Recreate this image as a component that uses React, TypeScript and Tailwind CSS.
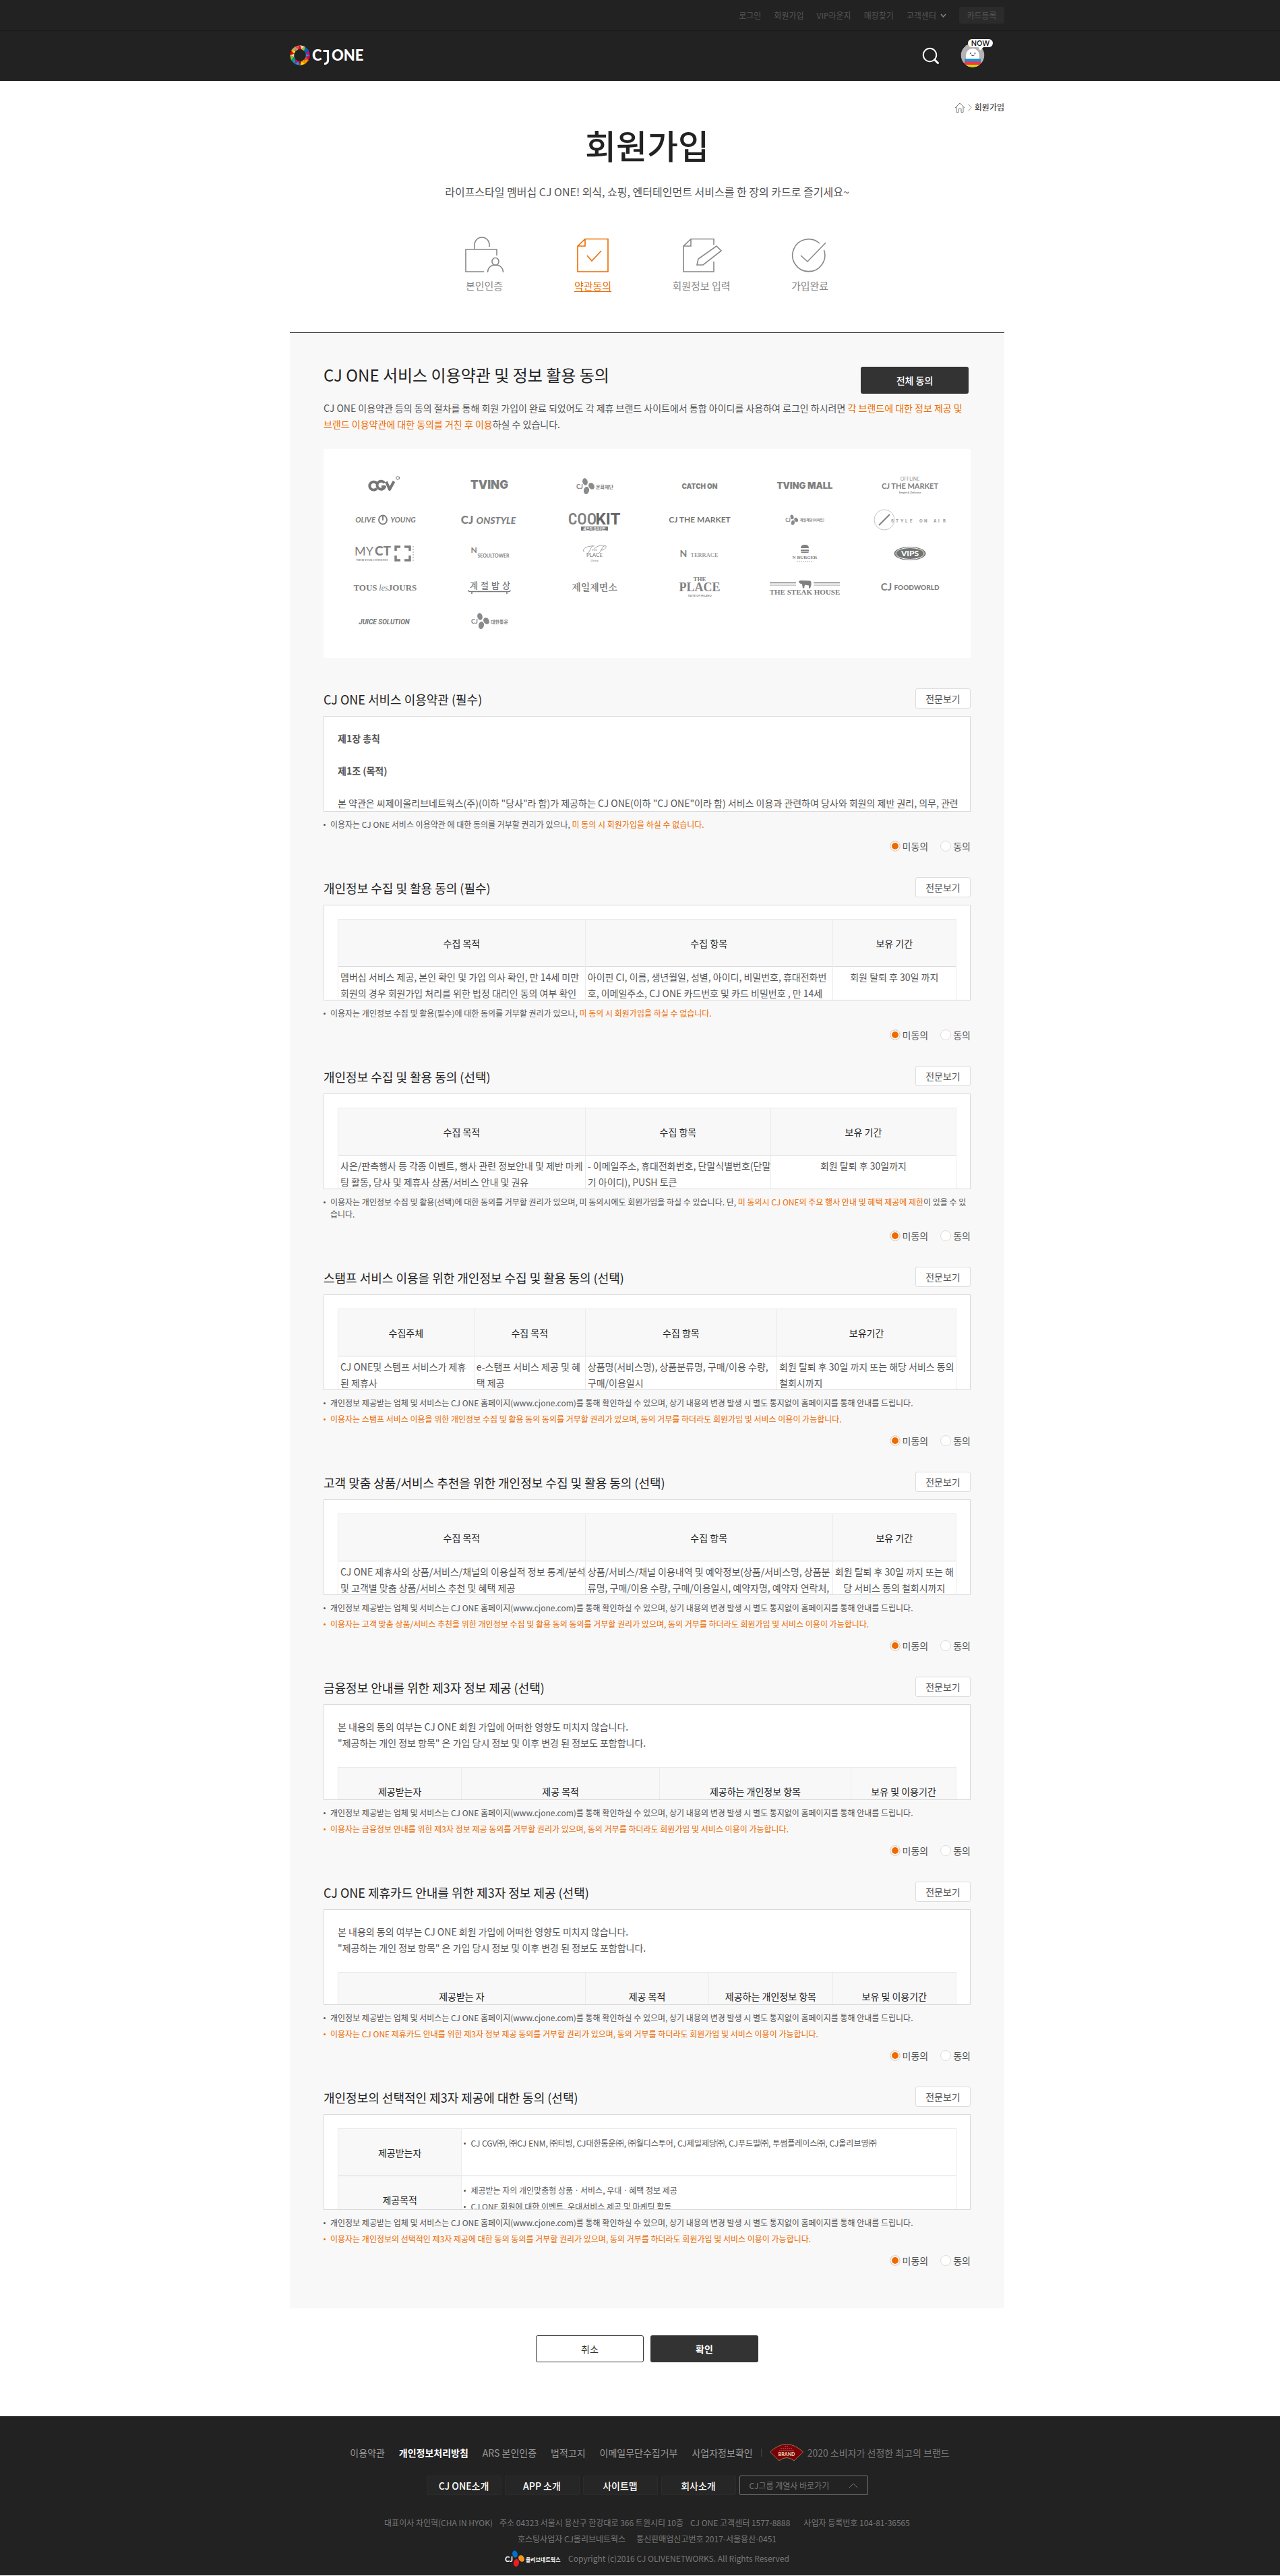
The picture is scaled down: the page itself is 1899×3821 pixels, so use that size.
import { Fragment, type ReactNode } from "react";

const LOGO_COLORS = ["#e5004f", "#f39800", "#ffe100", "#00a0e9", "#009e96", "#8fc31f", "#e60012", "#c9a063", "#ea5532", "#f6d3a0", "#0068b7", "#e4007f"];

function polar(r: number, turn: number) {
  const a = turn * Math.PI * 2;
  return `${(15 + r * Math.cos(a)).toFixed(2)},${(15 + r * Math.sin(a)).toFixed(2)}`;
}

function SiteLogo() {
  const n = 12;
  return (
    <svg width="112" height="32" viewBox="0 0 112 32" role="img" aria-label="CJ ONE">
      {Array.from({ length: n }, (_, i) => (
        <Fragment key={i}>
          <polygon points={`${polar(15, i / n)} ${polar(15, (i + 1) / n)} ${polar(9, (i + 0.5) / n)}`} fill={LOGO_COLORS[i % 12]} />
          <polygon points={`${polar(9, (i - 0.5) / n)} ${polar(9, (i + 0.5) / n)} ${polar(15, i / n)}`} fill={LOGO_COLORS[(i * 5 + 3) % 12]} />
        </Fragment>
      ))}
      <g fill="#fff" fontFamily="Lato, sans-serif" fontWeight="900" fontSize="22">
        <text x="33" y="23">C</text>
        <text x="62" y="23">ONE</text>
      </g>
      <path d="M49.500 8.500h7v14c0 3.500-2 5-5.500 5" fill="none" stroke="#fff" strokeWidth="3.200" />
    </svg>
  );
}

function SearchIcon() {
  return (
    <svg width="26" height="26" viewBox="0 0 26 26" fill="none" stroke="#fff" aria-hidden="true">
      <circle cx="11.500" cy="11.500" r="9.700" strokeWidth="2" />
      <path d="M18.500 18.500l5 5" strokeWidth="3" strokeLinecap="round" />
    </svg>
  );
}

function AvatarIcon() {
  return (
    <svg width="50" height="44" viewBox="0 0 50 44" aria-hidden="true">
      <defs>
        <clipPath id="avatar-face"><circle cx="18" cy="25" r="17.500" /></clipPath>
      </defs>
      <g clipPath="url(#avatar-face)">
        <circle cx="18" cy="25" r="17.500" fill="#b3b3b3" />
        <path d="M8 44V25a10 10 0 0 1 20 0v19z" fill="#fff" />
        <path d="M6 30h24v4H6z" fill="#0a9bdc" />
        <path d="M6 34h24v5H6z" fill="#f0384a" />
        <path d="M6 39h24v6H6z" fill="#cddc00" />
      </g>
      <circle cx="15" cy="22" r="0.900" fill="#333" />
      <circle cx="21.500" cy="22" r="0.900" fill="#333" />
      <path d="M15.500 24.500q2.700 2.500 5.400 0" fill="none" stroke="#333" />
      <rect x="11" y="1" width="37" height="12" rx="6" fill="#fff" />
      <path d="M26 12h9l-6 6z" fill="#fff" />
      <text x="29.500" y="11" textAnchor="middle" fontFamily="Inter, sans-serif" fontWeight="500" fontSize="11" fill="#111">NOW</text>
    </svg>
  );
}

const stepIcons = [
  <g key="lock">
    <path d="M29 53H2V20h46v9" />
    <path d="M15 19v-6a11 11 0 0 1 22 0v3" />
    <ellipse cx="46" cy="38" rx="5" ry="5.500" />
    <path d="M34.500 54c0-6 4-11 11.500-11s11.500 5 11.500 11" />
  </g>,
  <g key="check">
    <path d="M18 4.500h34V53H7V15z M18 4.500V15H7" />
    <path d="M21 29l7 8 14-15" />
  </g>,
  <g key="write">
    <path d="M48 13V4.500H14L3 15v38h45V38 M14 4.500V15H3" />
    <path d="M23 43l2-9 27-19 7 7-27 21z" />
  </g>,
  <g key="done">
    <path d="M44 11A24 24 0 1 0 50.500 21" />
    <path d="M16 29l10 9 27-28" />
  </g>,
];

const steps = ["본인인증", "약관동의", "회원정보 입력", "가입완료"];

/* ---- Partner brand marks ---- */

type Word = { t: string; x: number; y: number; s: number; f?: string; w?: number; i?: boolean; c?: string };

const SANS = "Lato, sans-serif";
const ROB = "Roboto, sans-serif";
const SERIF = "'Liberation Serif', serif";
const KR = "'Noto Sans CJK KR', sans-serif";
const INTER = "Inter, sans-serif";

function Mark({ label, words = [], children }: { label: string; words?: Word[]; children?: ReactNode }) {
  return (
    <svg width="120" height="40" viewBox="0 0 120 40" role="img" aria-label={label} fill="#808080">
      {children}
      {words.map((w) => (
        <text key={w.t} x={w.x} y={w.y} textAnchor="middle" fontSize={w.s} fontFamily={w.f ?? SANS} fontWeight={w.w ?? 700} fontStyle={w.i ? "italic" : "normal"} fill={w.c ?? "#808080"}>
          {w.t}
        </text>
      ))}
    </svg>
  );
}

function Petals({ x, y, s = 1, colors = ["#8a8a8a", "#8a8a8a", "#8a8a8a"] }: { x: number; y: number; s?: number; colors?: string[] }) {
  return (
    <g transform={`translate(${x} ${y}) scale(${s})`}>
      <ellipse cx="-3" cy="-6.500" rx="3.800" ry="5.200" transform="rotate(-15 -3 -6.500)" fill={colors[0]} />
      <ellipse cx="6.500" cy="0" rx="4" ry="5.200" transform="rotate(-35 6.500 0)" fill={colors[1]} />
      <ellipse cx="-1" cy="6.500" rx="4" ry="5.500" transform="rotate(12 -1 6.500)" fill={colors[2]} />
    </g>
  );
}

const brands: ReactNode[] = [
  <Mark key="cgv" label="CGV">
    <g fill="none" stroke="#757575" strokeWidth="4" strokeLinejoin="round">
      <path d="M49 16A6 6 0 1 0 49 23.500" />
      <path d="M60.500 15.500A6 6 0 1 0 61 21H56" />
      <path d="M63 13.500l5 11.500 6.500-12" />
    </g>
    <circle cx="80" cy="8" r="2.400" fill="none" stroke="#777" strokeWidth="1.500" strokeDasharray="1.600 0.800" />
  </Mark>,
  <Mark key="tving" label="TVING" words={[{ t: "TVING", x: 60, y: 24, s: 17, f: INTER, w: 900 }]} />,
  <Mark key="cf" label="CJ 문화재단" words={[{ t: "CJ", x: 38, y: 24, s: 9 }, { t: "문화재단", x: 75, y: 24, s: 7, f: KR }]}>
    <Petals x={49} y={20} />
  </Mark>,
  <Mark key="catch" label="CATCH ON" words={[{ t: "CATCH ON", x: 60, y: 24, s: 10, f: INTER, w: 900 }]} />,
  <Mark key="tvm" label="TVING MALL" words={[{ t: "TVING MALL", x: 60, y: 24, s: 13, f: INTER, w: 900 }]} />,
  <Mark key="off" label="OFFLINE CJ THE MARKET" words={[
    { t: "OFFLINE", x: 60, y: 12, s: 7, w: 400, c: "#999" },
    { t: "CJ THE MARKET", x: 60, y: 24, s: 11 },
    { t: "Simple & Delicious", x: 60, y: 31, s: 4 },
  ]} />,

  <Mark key="oy" label="OLIVE YOUNG" words={[{ t: "OLIVE", x: 32, y: 24, s: 11, i: true }, { t: "YOUNG", x: 88, y: 24, s: 11, i: true }]}>
    <ellipse cx="58" cy="20" rx="6" ry="6.600" fill="none" stroke="#808080" strokeWidth="2" />
    <path d="M58 14v7" stroke="#808080" strokeWidth="2" />
  </Mark>,
  <Mark key="ons" label="CJ ONSTYLE" words={[{ t: "CJ", x: 27, y: 26, s: 17, w: 900 }, { t: "ONSTYLE", x: 70, y: 26, s: 14, w: 900, i: true }]} />,
  <Mark key="cook" label="COOKIT" words={[{ t: "COO", x: 42, y: 27, s: 24, f: "'Roboto Condensed', Roboto, sans-serif", w: 500 }, { t: "KIT", x: 80, y: 27, s: 24, f: ROB, w: 700, c: "#666" }]}>
    <rect x="40" y="30" width="40" height="6" fill="#777" />
    <text x="60" y="35" textAnchor="middle" fontSize="5" fontFamily={KR} fontWeight="700" fill="#fff">셰프의 요리키트</text>
  </Mark>,
  <Mark key="market" label="CJ THE MARKET" words={[{ t: "CJ THE MARKET", x: 60, y: 24, s: 12, c: "#757575" }]} />,
  <Mark key="cj1" label="CJ 제일제당(이마트)" words={[{ t: "CJ", x: 35, y: 23, s: 7 }, { t: "제일제당(이마트)", x: 71, y: 22, s: 5, f: KR }]}>
    <Petals x={43} y={20} s={0.65} />
  </Mark>,
  <Mark key="soa" label="STYLE ON AIR">
    <circle cx="22" cy="20" r="15" fill="none" stroke="#c4c4c4" />
    <path d="M14 28L30 12" stroke="#808080" strokeWidth="2" />
    {[..."STYLE ON AIR"].map((c, i) => (
      <text key={i} x={32 + i * 7} y="24" fontSize="6" fontWeight="700" fontFamily={INTER} fill="#999">{c}</text>
    ))}
  </Mark>,

  <Mark key="myct" label="MYCT" words={[
    { t: "MY", x: 30, y: 23, s: 18, w: 400 },
    { t: "CT", x: 58, y: 23, s: 19, w: 900 },
    { t: "WITH YOUR CONTENTS", x: 42, y: 31, s: 4, f: SERIF },
  ]}>
    <path d="M77 16v-6h7M90 10h8v6M98 23v7h-8M84 30h-7v-7" fill="none" stroke="#808080" strokeWidth="3.500" />
    <path d="M103 9v22" stroke="#999" strokeDasharray="2 2" />
  </Mark>,
  <Mark key="nst" label="N SEOUL TOWER" words={[{ t: "N", x: 37, y: 19, s: 12 }, { t: "SEOULTOWER", x: 66, y: 26, s: 7 }]} />,
  <Mark key="tpp" label="THE PLACE Dining" words={[
    { t: "THE", x: 60, y: 16, s: 4, f: SERIF, w: 400 },
    { t: "PLACE", x: 60, y: 25, s: 8, w: 400 },
    { t: "Dining", x: 60, y: 32, s: 4, w: 400, i: true },
  ]}>
    <path d="M45 18c-5-3 2-10 15-9M58 8c-4 3-6 12-10 13M66 20c4-3 5-9 8-11 6-3 3 7-5 6M60 13c4-5 14-7 14-3" fill="none" stroke="#8a8a8a" strokeWidth="0.800" />
  </Mark>,
  <Mark key="nt" label="N TERRACE" words={[{ t: "N", x: 36, y: 25, s: 14 }, { t: "TERRACE", x: 67, y: 25, s: 9, f: SERIF, w: 400 }]} />,
  <Mark key="nb" label="N BURGER" words={[{ t: "N BURGER", x: 60, y: 28, s: 7, f: SERIF }]}>
    <path d="M54 12q0-5 6-5t6 5zM54 13h12v1H54zM54 15h12v1.500H54zM54 17.500h12q0 1.500-2 1.500h-8q-2 0-2-1.500z" />
    <path d="M48 32h24" stroke="#aaa" strokeDasharray="2 1" />
  </Mark>,
  <Mark key="vips" label="VIPS">
    <ellipse cx="60" cy="20" rx="23.500" ry="10" fill="#707370" />
    <ellipse cx="60" cy="20" rx="21" ry="8.500" fill="none" stroke="#fff" />
    <text x="60" y="24" textAnchor="middle" fontSize="12" fontFamily={SANS} fontWeight="900" fill="#fff">VIPS</text>
  </Mark>,

  <Mark key="tlj" label="TOUS les JOURS" words={[
    { t: "TOUS", x: 32, y: 25, s: 13, f: SERIF },
    { t: "les", x: 59, y: 25, s: 12, f: SERIF, w: 400, i: true },
    { t: "JOURS", x: 87, y: 25, s: 13, f: SERIF },
  ]} />,
  <Mark key="gj" label="계절밥상">
    {[..."계절밥상"].map((c, i) => (
      <text key={i} x={37 + i * 16} y="22" textAnchor="middle" fontSize="13" fontFamily={KR} fontWeight="500" fill="#777">{c}</text>
    ))}
    <path d="M29 24.500q0 2 2 2h58q2 0 2-2M34 27v3M86 27v3" fill="none" stroke="#777" strokeWidth="1.500" />
  </Mark>,
  <Mark key="jij" label="제일제면소" words={[{ t: "제일제면소", x: 60, y: 25, s: 14, f: "'Noto Serif CJK KR', 'Noto Sans CJK KR', serif" }]} />,
  <Mark key="tp" label="THE PLACE" words={[
    { t: "THE", x: 60, y: 11, s: 9, f: SERIF },
    { t: "PLACE", x: 60, y: 26, s: 18, f: SERIF },
    { t: "TASTE OF MILANO", x: 60, y: 34, s: 4 },
  ]} />,
  <Mark key="steak" label="THE STEAK HOUSE" words={[{ t: "THE STEAK HOUSE", x: 60, y: 31, s: 11, f: SERIF }]}>
    <path d="M8 13.500h39M73 13.500h39" stroke="#808080" strokeWidth="1.500" />
    <path d="M8 17h39M73 17h39" stroke="#999" />
    <path d="M51 11l3-1 14 .5q2 1 1.500 6l-1.500 5h-2v-4l-6-1-1 5h-2l-1-6-3-1-2-2z" />
  </Mark>,
  <Mark key="fw" label="CJ FOODWORLD" words={[{ t: "CJ", x: 25, y: 25, s: 15 }, { t: "FOODWORLD", x: 70, y: 24, s: 10, w: 900 }]} />,

  <Mark key="js" label="JUICE SOLUTION" words={[{ t: "JUICE SOLUTION", x: 60, y: 25, s: 10, f: ROB, w: 700, i: true, c: "#757575" }]} />,
  <Mark key="dt" label="CJ 대한통운" words={[{ t: "CJ", x: 38, y: 24, s: 9 }, { t: "대한통운", x: 75, y: 24, s: 7, f: KR }]}>
    <Petals x={49} y={20} />
  </Mark>,
];

/* ---- Consent sections ---- */

const Em = ({ children }: { children: ReactNode }) => <em className="text-[#ee6b00] not-italic">{children}</em>;

type Column = { head: string; width: string; cell?: string; center?: boolean };

function ConsentTable({ caption, columns }: { caption: string; columns: Column[] }) {
  return (
    <table aria-label={caption} className="w-full table-fixed border-collapse text-sm leading-6">
      <thead>
        <tr className="h-[70px] border-t border-b border-t-[#e8e8e8] border-b-[#d9d9d9] bg-[#f8f8f8]">
          {columns.map((c) => (
            <th key={c.head} scope="col" className={`${c.width} border-x border-[#ebebeb] font-normal text-[#222]`}>{c.head}</th>
          ))}
        </tr>
      </thead>
      <tbody>
        <tr>
          {columns.map((c) => (
            <td key={c.head} className={`border-x border-[#ebebeb] px-[3px] pt-[3px] pb-1 align-top whitespace-pre ${c.center ? "text-center" : "text-left"}`}>{c.cell}</td>
          ))}
        </tr>
      </tbody>
    </table>
  );
}

const Intro = () => (
  <p className="mb-6 text-sm leading-6">
    본 내용의 동의 여부는 CJ ONE 회원 가입에 어떠한 영향도 미치지 않습니다.
    <br />
    &quot;제공하는 개인 정보 항목&quot; 은 가입 당시 정보 및 이후 변경 된 정보도 포함합니다.
  </p>
);

const siteNote = "개인정보 제공받는 업체 및 서비스는 CJ ONE 홈페이지(www.cjone.com)를 통해 확인하실 수 있으며, 상기 내용의 변경 발생 시 별도 통지없이 홈페이지를 통해 안내를 드립니다.";

type Note = { body: ReactNode; accent?: boolean };

function Notes({ items, className = "" }: { items: Note[]; className?: string }) {
  return (
    <ul className={`flex flex-col gap-1.5 text-xs leading-[18px] ${className}`}>
      {items.map((n, i) => (
        <li key={i} className={`flex gap-[7px] ${n.accent ? "text-[#ee6b00]" : ""}`}>
          <span className="mt-2 size-[3px] shrink-0 rounded-full bg-current" />
          <span>{n.body}</span>
        </li>
      ))}
    </ul>
  );
}

const sections: { title: string; content: ReactNode; notes: Note[] }[] = [
  {
    title: "CJ ONE 서비스 이용약관 (필수)",
    content: (
      <div className="flex flex-col gap-6 text-sm leading-6">
        <h4 className="font-bold">제1장 총칙</h4>
        <h4 className="font-bold">제1조 (목적)</h4>
        <p className="whitespace-nowrap">본 약관은 씨제이올리브네트웍스(주)(이하 &quot;당사&quot;라 함)가 제공하는 CJ ONE(이하 &quot;CJ ONE&quot;이라 함) 서비스 이용과 관련하여 당사와 회원의 제반 권리, 의무, 관련</p>
      </div>
    ),
    notes: [{ body: <>이용자는 CJ ONE 서비스 이용약관 에 대한 동의를 거부할 권리가 있으나, <Em>미 동의 시 회원가입을 하실 수 없습니다.</Em></> }],
  },
  {
    title: "개인정보 수집 및 활용 동의 (필수)",
    content: (
      <ConsentTable caption="개인정보 수집 및 활용 (필수)" columns={[
        { head: "수집 목적", width: "w-[40%]", cell: "멤버십 서비스 제공, 본인 확인 및 가입 의사 확인, 만 14세 미만\n회원의 경우 회원가입 처리를 위한 법정 대리인 동의 여부 확인" },
        { head: "수집 항목", width: "w-[40%]", cell: "아이핀 CI, 이름, 생년월일, 성별, 아이디, 비밀번호, 휴대전화번\n호, 이메일주소, CJ ONE 카드번호 및 카드 비밀번호 , 만 14세" },
        { head: "보유 기간", width: "w-[20%]", cell: "회원 탈퇴 후 30일 까지", center: true },
      ]} />
    ),
    notes: [{ body: <>이용자는 개인정보 수집 및 활용(필수)에 대한 동의를 거부할 권리가 있으나, <Em>미 동의 시 회원가입을 하실 수 없습니다.</Em></> }],
  },
  {
    title: "개인정보 수집 및 활용 동의 (선택)",
    content: (
      <ConsentTable caption="개인정보 수집 및 활용 (선택)" columns={[
        { head: "수집 목적", width: "w-[40%]", cell: "사은/판촉행사 등 각종 이벤트, 행사 관련 정보안내 및 제반 마케\n팅 활동, 당사 및 제휴사 상품/서비스 안내 및 권유" },
        { head: "수집 항목", width: "w-[30%]", cell: "- 이메일주소, 휴대전화번호, 단말식별번호(단말\n기 아이디), PUSH 토큰" },
        { head: "보유 기간", width: "w-[30%]", cell: "회원 탈퇴 후 30일까지", center: true },
      ]} />
    ),
    notes: [{ body: <>이용자는 개인정보 수집 및 활용(선택)에 대한 동의를 거부할 권리가 있으며, 미 동의시에도 회원가입을 하실 수 있습니다. 단, <Em>미 동의시 CJ ONE의 주요 행사 안내 및 혜택 제공에 제한</Em>이 있을 수 있습니다.</> }],
  },
  {
    title: "스탬프 서비스 이용을 위한 개인정보 수집 및 활용 동의 (선택)",
    content: (
      <ConsentTable caption="스탬프 서비스 개인정보 수집 및 활용" columns={[
        { head: "수집주체", width: "w-[22%]", cell: "CJ ONE및 스템프 서비스가 제휴\n된 제휴사" },
        { head: "수집 목적", width: "w-[18%]", cell: "e-스탬프 서비스 제공 및 혜\n택 제공" },
        { head: "수집 항목", width: "w-[31%]", cell: "상품명(서비스명), 상품분류명, 구매/이용 수량,\n구매/이용일시" },
        { head: "보유기간", width: "w-[29%]", cell: "회원 탈퇴 후 30일 까지 또는 해당 서비스 동의\n철회시까지" },
      ]} />
    ),
    notes: [{ body: siteNote }, { body: "이용자는 스탬프 서비스 이용을 위한 개인정보 수집 및 활용 동의 동의를 거부할 권리가 있으며, 동의 거부를 하더라도 회원가입 및 서비스 이용이 가능합니다.", accent: true }],
  },
  {
    title: "고객 맞춤 상품/서비스 추천을 위한 개인정보 수집 및 활용 동의 (선택)",
    content: (
      <ConsentTable caption="고객 맞춤 상품/서비스 추천" columns={[
        { head: "수집 목적", width: "w-[40%]", cell: "CJ ONE 제휴사의 상품/서비스/채널의 이용실적 정보 통계/분석\n및 고객별 맞춤 상품/서비스 추천 및 혜택 제공" },
        { head: "수집 항목", width: "w-[40%]", cell: "상품/서비스/채널 이용내역 및 예약정보(상품/서비스명, 상품분\n류명, 구매/이용 수량, 구매/이용일시, 예약자명, 예약자 연락처," },
        { head: "보유 기간", width: "w-[20%]", cell: "회원 탈퇴 후 30일 까지 또는 해\n당 서비스 동의 철회시까지", center: true },
      ]} />
    ),
    notes: [{ body: siteNote }, { body: "이용자는 고객 맞춤 상품/서비스 추천을 위한 개인정보 수집 및 활용 동의 동의를 거부할 권리가 있으며, 동의 거부를 하더라도 회원가입 및 서비스 이용이 가능합니다.", accent: true }],
  },
  {
    title: "금융정보 안내를 위한 제3자 정보 제공 (선택)",
    content: (
      <>
        <Intro />
        <ConsentTable caption="금융정보 안내 제3자 정보 제공" columns={[
          { head: "제공받는자", width: "w-[20%]" },
          { head: "제공 목적", width: "w-[32%]" },
          { head: "제공하는 개인정보 항목", width: "w-[31%]" },
          { head: "보유 및 이용기간", width: "w-[17%]" },
        ]} />
      </>
    ),
    notes: [{ body: siteNote }, { body: "이용자는 금융정보 안내를 위한 제3자 정보 제공 동의를 거부할 권리가 있으며, 동의 거부를 하더라도 회원가입 및 서비스 이용이 가능합니다.", accent: true }],
  },
  {
    title: "CJ ONE 제휴카드 안내를 위한 제3자 정보 제공 (선택)",
    content: (
      <>
        <Intro />
        <ConsentTable caption="제휴카드 안내 제3자 정보 제공" columns={[
          { head: "제공받는 자", width: "w-[40%]" },
          { head: "제공 목적", width: "w-[20%]" },
          { head: "제공하는 개인정보 항목", width: "w-[20%]" },
          { head: "보유 및 이용기간", width: "w-[20%]" },
        ]} />
      </>
    ),
    notes: [{ body: siteNote }, { body: "이용자는 CJ ONE 제휴카드 안내를 위한 제3자 정보 제공 동의를 거부할 권리가 있으며, 동의 거부를 하더라도 회원가입 및 서비스 이용이 가능합니다.", accent: true }],
  },
  {
    title: "개인정보의 선택적인 제3자 제공에 대한 동의 (선택)",
    content: (
      <table aria-label="개인정보의 선택적인 제3자 제공" className="w-full table-fixed border-collapse border-x border-t border-[#e8e8e8] text-sm">
        <colgroup>
          <col className="w-1/5" />
          <col className="w-4/5" />
        </colgroup>
        <tbody>
          <tr className="h-[70px] border-b border-[#d9d9d9]">
            <th scope="row" className="border-r border-[#ebebeb] bg-[#f8f8f8] font-normal text-[#222]">제공받는자</th>
            <td className="px-[3px] pt-3 align-top">
              <Notes items={[{ body: "CJ CGV㈜, ㈜CJ ENM, ㈜티빙, CJ대한통운㈜, ㈜월디스투어, CJ제일제당㈜, CJ푸드빌㈜, 투썸플레이스㈜, CJ올리브영㈜" }]} />
            </td>
          </tr>
          <tr className="h-[70px]">
            <th scope="row" className="border-r border-[#ebebeb] bg-[#f8f8f8] font-normal text-[#222]">제공목적</th>
            <td className="px-[3px] pt-3 align-top">
              <Notes items={[{ body: "제공받는 자의 개인맞춤형 상품ㆍ서비스, 우대ㆍ혜택 정보 제공" }, { body: "CJ ONE 회원에 대한 이벤트, 우대서비스 제공 및 마케팅 활동" }]} />
            </td>
          </tr>
        </tbody>
      </table>
    ),
    notes: [{ body: siteNote }, { body: "이용자는 개인정보의 선택적인 제3자 제공에 대한 동의 동의를 거부할 권리가 있으며, 동의 거부를 하더라도 회원가입 및 서비스 이용이 가능합니다.", accent: true }],
  },
];

function ConsentRadio({ name, label, checked }: { name: string; label: string; checked?: boolean }) {
  return (
    <label className="flex items-center gap-[3px] text-sm leading-4">
      <input
        type="radio"
        name={name}
        defaultChecked={checked}
        className="size-4 appearance-none rounded-full border border-[#ddd] bg-white shadow-[inset_0_0_0_2px_#fff] checked:bg-[#ee6b00]"
      />
      {label}
    </label>
  );
}

function Section({ index }: { index: number }) {
  const s = sections[index];
  return (
    <section>
      <div className="flex h-[30px] items-center justify-between">
        <h3 className="pt-0.5 text-lg leading-6 text-[#222]">{s.title}</h3>
        <button type="button" className="h-[30px] w-[82px] rounded-[3px] border border-[#ddd] bg-white text-sm leading-6">전문보기</button>
      </div>
      <div className="mt-[11px] h-[142px] overflow-hidden border border-[#d9d9d9] bg-white p-5">{s.content}</div>
      <Notes items={s.notes} className="mt-2.5" />
      <div className="mt-[15px] flex justify-end gap-[18px]" role="radiogroup" aria-label={s.title}>
        <ConsentRadio name={`consent-${index}`} label="미동의" checked />
        <ConsentRadio name={`consent-${index}`} label="동의" />
      </div>
    </section>
  );
}

function BrandBadge() {
  return (
    <svg width="50" height="26" viewBox="0 0 50 26" aria-hidden="true">
      <path d="M0.500 12Q25-11 49.500 12L36 25Q25 16 14 25z" fill="#7a0008" stroke="#b08a60" strokeWidth="0.800" />
      <text x="25" y="18" textAnchor="middle" fontFamily={SANS} fontWeight="900" fontSize="7" fill="#e8c8a0">BRAND</text>
      <path d="M22 4h6M16 7h18M14 10h22" stroke="#b5705c" strokeDasharray="2 1" />
    </svg>
  );
}

const footerLinks = ["이용약관", "개인정보처리방침", "ARS 본인인증", "법적고지", "이메일무단수집거부", "사업자정보확인"];
const footerMenu = ["CJ ONE소개", "APP 소개", "사이트맵", "회사소개"];

export default function App() {
  return (
    <div className="bg-white font-['Noto_Sans_CJK_KR',sans-serif] text-[#555]">
      <header className="bg-[#222] pl-[21px]">
        <div className="mx-auto flex h-[45px] max-w-[1060px] items-center justify-end gap-[19px] text-xs text-[#555]">
          <a href="#login">로그인</a>
          <a href="#join">회원가입</a>
          <a href="#vip">VIP라운지</a>
          <a href="#stores">매장찾기</a>
          <button type="button" className="flex items-center gap-1.5">
            고객센터
            <svg width="9" height="6" viewBox="0 0 9 6" fill="none" stroke="#888" strokeWidth="1.400" aria-hidden="true"><path d="M1 1l3.500 4L8 1" /></svg>
          </button>
          <button type="button" className="h-[25px] w-[67px] rounded-[3px] bg-[#2b2b2b]">카드등록</button>
        </div>
      </header>
      <div className="border-t border-[#1b1b1b] bg-[#222] pl-[21px]">
        <div className="mx-auto flex h-[74px] max-w-[1060px] items-center justify-between">
          <a href="#home"><SiteLogo /></a>
          <div className="flex items-center gap-[31px] pr-[15px]">
            <button type="button" aria-label="검색"><SearchIcon /></button>
            <a href="#my" className="pb-2" aria-label="NOW"><AvatarIcon /></a>
          </div>
        </div>
      </div>

      <div className="pl-[21px]">
        <main className="mx-auto max-w-[1060px]">
          <nav className="flex items-center justify-end gap-1 pt-[30px] text-xs leading-[18px] text-[#222]" aria-label="현재 위치">
            <a href="#home" aria-label="홈">
              <svg width="16" height="15" viewBox="0 0 16 15" fill="none" stroke="#777" aria-hidden="true"><path d="M1 8L8 1l7 7M3 6.500v8h3v-5h4v5h3v-8" /></svg>
            </a>
            <svg width="6" height="11" viewBox="0 0 6 11" fill="none" stroke="#999" aria-hidden="true"><path d="M0.500 0.500l4.500 5-4.500 5" /></svg>
            <span>회원가입</span>
          </nav>
          <h1 className="mt-[11px] text-center text-[50px] leading-[70px] font-medium text-[#222]">회원가입</h1>
          <p className="mt-[23px] text-center text-base leading-6">라이프스타일 멤버십 CJ ONE! 외식, 쇼핑, 엔터테인먼트 서비스를 한 장의 카드로 즐기세요~</p>

          <ol className="mt-[54px] flex justify-center">
            {steps.map((label, i) => (
              <li key={label} className={`flex w-[161px] flex-col items-center ${i === 1 ? "text-[#ee6b00]" : "text-[#888]"}`}>
                <svg width="60" height="56" viewBox="0 0 60 56" fill="none" stroke="currentColor" strokeWidth="1.600" aria-hidden="true">{stepIcons[i]}</svg>
                <span className={`mt-1.5 text-[15px] leading-6 ${i === 1 ? "underline underline-offset-2" : ""}`} aria-current={i === 1 ? "step" : undefined}>{label}</span>
              </li>
            ))}
          </ol>

          <div className="mt-[57px] border-t border-[#222] bg-[#f8f8f8] px-[50px] pt-[50px] pb-[63px]">
            <div className="flex h-10 items-start justify-between">
              <h2 className="-mt-1 text-2xl leading-8 text-[#222]">CJ ONE 서비스 이용약관 및 정보 활용 동의</h2>
              <button type="button" className="mr-[3px] h-10 w-40 rounded-[3px] bg-[#333] text-sm font-medium text-white">전체 동의</button>
            </div>
            <p className="mt-[9px] text-sm leading-6">
              CJ ONE 이용약관 등의 동의 절차를 통해 회원 가입이 완료 되었어도 각 제휴 브랜드 사이트에서 통합 아이디를 사용하여 로그인 하시려면 <Em>각 브랜드에 대한 정보 제공 및 브랜드 이용약관에 대한 동의를 거친 후 이용</Em>하실 수 있습니다.
            </p>
            <ul className="mt-[25px] grid auto-rows-[50px] grid-cols-6 bg-white px-3 py-[30px]">
              {brands.map((b, i) => (
                <li key={i} className="flex items-center justify-center">{b}</li>
              ))}
            </ul>
            <form className="mt-[45px] flex flex-col gap-[38px]">
              {sections.map((s, i) => <Section key={s.title} index={i} />)}
            </form>
          </div>

          <div className="flex justify-center gap-2.5 pt-10 pb-20 text-sm">
            <button type="button" className="h-10 w-40 rounded-[3px] border border-[#333] bg-white text-[#333]">취소</button>
            <button type="submit" className="h-10 w-40 rounded-[3px] bg-[#333] font-bold text-white">확인</button>
          </div>
        </main>
      </div>

      <footer className="bg-[#222] pt-10 pb-3 pl-[21px] text-[#777]">
        <div className="flex h-7 items-center justify-center pl-2 text-sm">
          <ul className="flex gap-[21px] text-[#999]">
            {footerLinks.map((l, i) => (
              <li key={l}><a href="#policy" className={i === 1 ? "font-bold text-white" : ""}>{l}</a></li>
            ))}
          </ul>
          <span className="mx-3 h-3 w-px bg-[#444]" />
          <BrandBadge />
          <span className="ml-1.5">2020 소비자가 선정한 최고의 브랜드</span>
        </div>
        <div className="mt-5 flex justify-center gap-[5px] text-sm">
          {footerMenu.map((m) => (
            <a key={m} href="#about" className="flex h-[29px] w-[111px] items-center justify-center rounded-[2px] border border-[#2c2c2c] bg-[#262626] font-medium text-white">{m}</a>
          ))}
          <button type="button" className="flex h-[29px] w-[191px] items-center justify-between rounded-[2px] border border-[#777] px-3.5 text-xs">
            CJ그룹 계열사 바로가기
            <svg width="14" height="8" viewBox="0 0 14 8" fill="none" stroke="#777" aria-hidden="true"><path d="M1 7l6-6 6 6" /></svg>
          </button>
        </div>
        <address className="mt-[29px] text-center text-xs leading-6 not-italic">
          <p className="flex justify-center">
            <span>대표이사 차인혁(CHA IN HYOK)</span>
            <span className="ml-2.5">주소 04323 서울시 용산구 한강대로 366 트윈시티 10층</span>
            <span className="ml-2.5">CJ ONE 고객센터 1577-8888</span>
            <span className="ml-5">사업자 등록번호 104-81-36565</span>
          </p>
          <p className="flex justify-center gap-4">
            <span>호스팅사업자 CJ올리브네트웍스</span>
            <span>통신판매업신고번호 2017-서울용산-0451</span>
          </p>
        </address>
        <div className="mt-1 flex items-center justify-center gap-2 text-xs leading-6">
          <svg width="86" height="26" viewBox="0 0 86 26" role="img" aria-label="CJ 올리브네트웍스">
            <text x="0" y="18" fontFamily={SANS} fontWeight="700" fontSize="11" fill="#fff">CJ</text>
            <Petals x={18} y={13} colors={["#0072ce", "#f7941d", "#ed1c24"]} />
            <text x="31" y="18" fontFamily={KR} fontWeight="700" fontSize="8" fill="#fff">올리브네트웍스</text>
          </svg>
          <span>Copyright (c)2016 CJ OLIVENETWORKS. All Rights Reserved</span>
        </div>
      </footer>
    </div>
  );
}
